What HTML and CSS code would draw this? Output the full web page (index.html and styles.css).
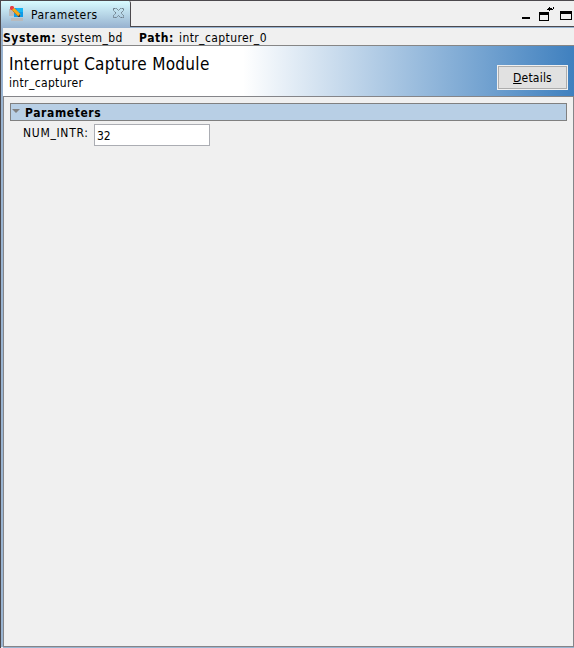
FILE: index.html
```html
<!DOCTYPE html>
<html lang="en">
<head>
<meta charset="utf-8">
<title>Parameters</title>
<link rel="stylesheet" href="styles.css">
</head>
<body>
<div class="window">
  <header class="tabbar">
    <div class="tab">
      <svg class="tab-icon" width="15" height="16" viewBox="0 0 15 16">
        <path fill="#b8babd" d="M0 3h5v7H0zM2 12h12v3H2z"/>
        <path fill="#109be8" d="M5 2h9v9H5z"/>
        <path fill="#18b6f3" d="M7 2h7v4H9z"/>
        <path d="M3.500 2.500l7 7" stroke="#f5aa16" stroke-width="3.200"/>
        <path d="M3.500 4.500l6 6" stroke="#a97832" stroke-width=".8"/>
        <path fill="#e83e45" d="M2 0h2l1 1v1L3 4H2L1 3V1z"/>
        <path fill="#39424a" d="M11 8v3H8.500z"/>
      </svg>
      <span class="tab-title">Parameters</span>
      <svg class="close" width="11" height="10" viewBox="0 0 11 10">
        <path d="M.5.5h3l2 2 2-2h3v2L8 5l2.500 2.500v2h-3l-2-2-2 2h-3v-2L3 5 .5 2.500z" fill="none" stroke="#62717c" stroke-width=".9" stroke-dasharray="1.600 .4"/>
      </svg>
    </div>
    <svg class="controls" width="54" height="16" viewBox="0 0 54 16" shape-rendering="crispEdges">
      <path fill="#000" d="M2 11h8v2H2zM19 6h10v3H19zM40 5h12v3H40z"/>
      <path d="M19.500 6.500h9v8h-9zM40.500 5.500h11v8h-11z" fill="none" stroke="#000"/>
      <path fill="#000" d="M27 3h1V2h1V1h1v1h2v1h1V1h1v2h-1v1h-3v1h-1V4h-2z"/>
    </svg>
  </header>
  <div class="crumbs">
    <b class="system-key">System:</b><span class="system">system_bd</span>
    <b class="path-key">Path:</b><span class="path">intr_capturer_0</span>
  </div>
  <section class="banner">
    <div>
      <h1>Interrupt Capture Module</h1>
      <p>intr_capturer</p>
    </div>
    <button class="details"><u>D</u>etails</button>
  </section>
  <main class="panel">
    <div class="group"><i class="arrow"></i><b>Parameters</b></div>
    <div class="field"><label for="num">NUM_INTR:</label><input id="num" value="32"></div>
  </main>
</div>
</body>
</html>
```
FILE: styles.css
```css
* { box-sizing: border-box; }
body {
  margin: 0;
  color: #000;
  font: 12px/16px "DejaVu Sans Condensed", "DejaVu Sans", sans-serif;
  font-stretch: condensed;
  letter-spacing: .4px;
}
.window {
  display: flex;
  flex-direction: column;
  width: 574px;
  height: 648px;
  overflow: hidden;
  background: #f0f0f0;
  border-left: 1px solid #4c494d;
}
.tabbar {
  display: flex;
  justify-content: space-between;
  flex: none;
  height: 28px;
  border-top: 1px solid #4c494d;
  background: linear-gradient(#f0f0f0 25px, #4c494d 25px, #4c494d 26px, #99b4d1 26px);
}
.tab {
  display: flex;
  flex: none;
  width: 130px;
  height: 26px;
  padding: 5px 0 0 8px;
  border-right: 1px solid #4c494d;
  border-radius: 3px 2px 0 0;
  background: linear-gradient(#d8fbff, #99b4d1);
}
.tab-icon, .close { flex: none; }
.tab-title { width: 67px; margin: 1px 0 0 7px; white-space: nowrap; letter-spacing: .5px; }
.close { margin: 2px 0 0 15px; }
.controls { margin: 5px 0 0; }
.crumbs {
  display: flex;
  flex: none;
  height: 18px;
  padding-top: 2px;
  border-left: 2px solid #99b4d1;
  border-bottom: 1px solid #868686;
  white-space: nowrap;
}
.crumbs span, .crumbs b { flex: none; }
.system-key { width: 58px; letter-spacing: .55px; }
.system { width: 78px; }
.path-key { width: 40px; letter-spacing: .6px; }
.banner {
  display: flex;
  justify-content: space-between;
  flex: none;
  height: 50px;
  padding: 8px 6px 0 6px;
  border-left: 2px solid #99b4d1;
  background: linear-gradient(90deg, #fff 240px, #3f80bf);
}
h1 { margin: 0; font-size: 17px; line-height: 20px; font-weight: 400; white-space: nowrap; letter-spacing: .3px; }
p { margin: 1px 0 0; letter-spacing: .35px; }
.details {
  width: 71px;
  height: 25px;
  margin-top: 11px;
  padding: 0;
  border: 1px solid #f0f0f0;
  outline: 0;
  background: #e1e1e1;
  box-shadow: inset 0 0 0 1px #adadad;
  font: inherit;
  letter-spacing: .2px;
  color: inherit;
}
.panel {
  flex: 1;
  margin-left: 2px;
  padding: 6px 6px 0;
  border: 1px solid #858589;
  box-shadow: -2px 0 #99b4d1, 0 1px #99b4d1;
  margin-bottom: 1px;
}
.group {
  display: flex;
  height: 18px;
  padding-top: 1px;
  border: 1px solid #808080;
  background: #b8cfe5;
  letter-spacing: .6px;
}
.arrow {
  margin: 4px 5px 0 1px;
  width: 8px;
  height: 4px;
  background: #808080;
  clip-path: polygon(0 0, 100% 0, 50% 100%);
}
.field { display: flex; padding: 3px 0 0 13px; }
label { width: 71px; padding-top: 1px; white-space: nowrap; letter-spacing: .7px; }
input {
  width: 116px;
  height: 22px;
  padding: 2px 2px 0;
  border: 1px solid #abadb3;
  background: #fff;
  color: #000;
  font: inherit;
  letter-spacing: 0;
}
```
